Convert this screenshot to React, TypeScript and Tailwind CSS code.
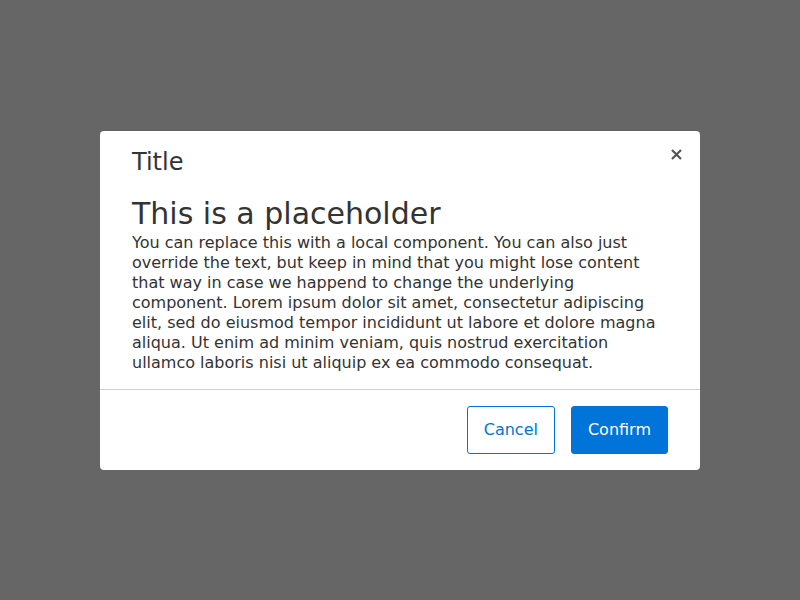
import React from 'react'

export default function App() {
  return (
    <div
      className="flex h-[600px] w-[800px] items-center justify-center bg-[#666666] text-[#333333]"
      style={{ fontFamily: '"DejaVu Sans", sans-serif' }}
    >
      <div className="w-[600px] rounded-[4px] bg-white">
        {/* Header */}
        <div className="relative px-8 pt-[15px] pb-4">
          <h2 className="text-[24px] leading-[32px]">Title</h2>
          <button className="absolute top-[12px] right-[12px] flex h-6 w-6 items-center justify-center text-[#555]">
            <svg width="11" height="11" viewBox="0 0 11 11">
              <path d="M1 1L10 10M10 1L1 10" stroke="currentColor" strokeWidth="2.2" />
            </svg>
          </button>
          <h1 className="mt-4 text-[30px] leading-[39px]">This is a placeholder</h1>
          <p className="text-[16px] leading-[20px]">
            You can replace this with a local component. You can also just override the text, but keep in
            mind that you might lose content that way in case we happend to change the underlying component.
            Lorem ipsum dolor sit amet, consectetur adipiscing elit, sed do eiusmod tempor incididunt ut labore
            et dolore magna aliqua. Ut enim ad minim veniam, quis nostrud exercitation ullamco laboris nisi ut
            aliquip ex ea commodo consequat.
          </p>
        </div>

        {/* Footer */}
        <div className="flex justify-end gap-4 border-t border-[#d0d0d0] px-8 py-4">
          <button className="h-12 rounded-[3px] border border-[#0074d9] bg-white px-4 text-[16px] text-[#0074d9]">
            Cancel
          </button>
          <button className="h-12 rounded-[3px] border border-[#0074d9] bg-[#0074d9] px-4 text-[16px] text-white">
            Confirm
          </button>
        </div>
      </div>
    </div>
  )
}
